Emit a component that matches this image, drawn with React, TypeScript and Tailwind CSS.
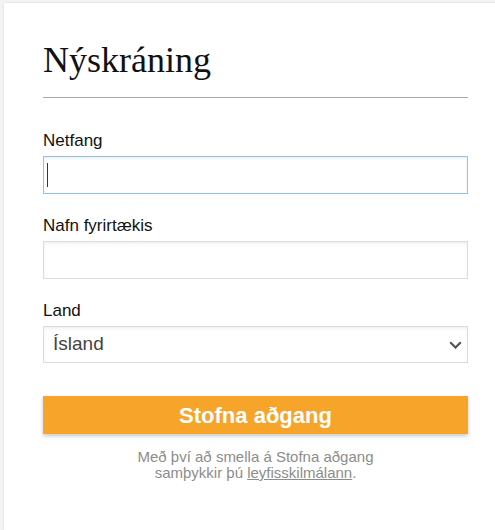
import type { ReactNode } from 'react'

const sans = "font-['Liberation_Sans',Arial,sans-serif]"

function Field({ label, children }: { label: string; children: ReactNode }) {
  return (
    <div className="flex flex-col">
      <label className={`${sans} text-[17px] leading-[20px] text-[#111]`}>{label}</label>
      <div className="mt-[5px]">{children}</div>
    </div>
  )
}

export default function App() {
  return (
    <main className="min-h-screen bg-[#f3f3f3] pl-[4px] pt-[3px]">
      <section className="min-h-[527px] bg-white pl-[39px] pr-[27px] pt-[37px] shadow-[0_0_2px_rgba(0,0,0,0.12)]">
        <h1 className="font-['Liberation_Serif','Times_New_Roman',serif] text-[36px] leading-[40px] text-[#111]">
          Nýskráning
        </h1>
        <hr className="mt-[17px] border-0 border-t border-[#aaaaaa]" />

        <div className="mt-[33px] flex flex-col gap-[22px]">
          <Field label="Netfang">
            <div className="relative">
              <input
                className={`${sans} block h-[38px] w-full border border-[#8ec3ee] bg-white px-[9px] text-[18px] text-[#333] shadow-[inset_0_2px_3px_rgba(0,0,0,0.06)] outline-none`}
                readOnly
                type="email"
              />
              <span className="absolute left-[4px] top-[7px] h-[24px] w-px bg-[#333]" />
            </div>
          </Field>

          <Field label="Nafn fyrirtækis">
            <input
              className={`${sans} block h-[38px] w-full border border-[#dcdcdc] bg-white px-[9px] text-[18px] text-[#333] shadow-[inset_0_2px_3px_rgba(0,0,0,0.06)] outline-none`}
              readOnly
              type="text"
            />
          </Field>

          <Field label="Land">
            <div
              className={`${sans} flex h-[37px] w-full items-center justify-between border border-[#dcdcdc] bg-white pl-[9px] pr-[5px] text-[19px] text-[#444] shadow-[inset_0_2px_3px_rgba(0,0,0,0.06)]`}
            >
              <span>Ísland</span>
              <svg className="h-[8px] w-[13px]" fill="none" viewBox="0 0 13 8">
                <path d="M1.2 1.2l5.3 5.3 5.3-5.3" stroke="#555" strokeWidth="2.2" />
              </svg>
            </div>
          </Field>
        </div>

        <button
          className={`${sans} mt-[33px] flex h-[38px] w-full items-center justify-center bg-[#f7a42b] text-[22px] font-bold text-white shadow-[0_2px_4px_rgba(0,0,0,0.22)]`}
          type="button"
        >
          Stofna aðgang
        </button>

        <p className={`${sans} mt-[15px] text-center text-[15px] leading-[16px] text-[#8c8c8c]`}>
          Með því að smella á Stofna aðgang
          <br />
          samþykkir þú{' '}
          <a className="underline" href="#">
            leyfisskilmálann
          </a>
          .
        </p>
      </section>
    </main>
  )
}
